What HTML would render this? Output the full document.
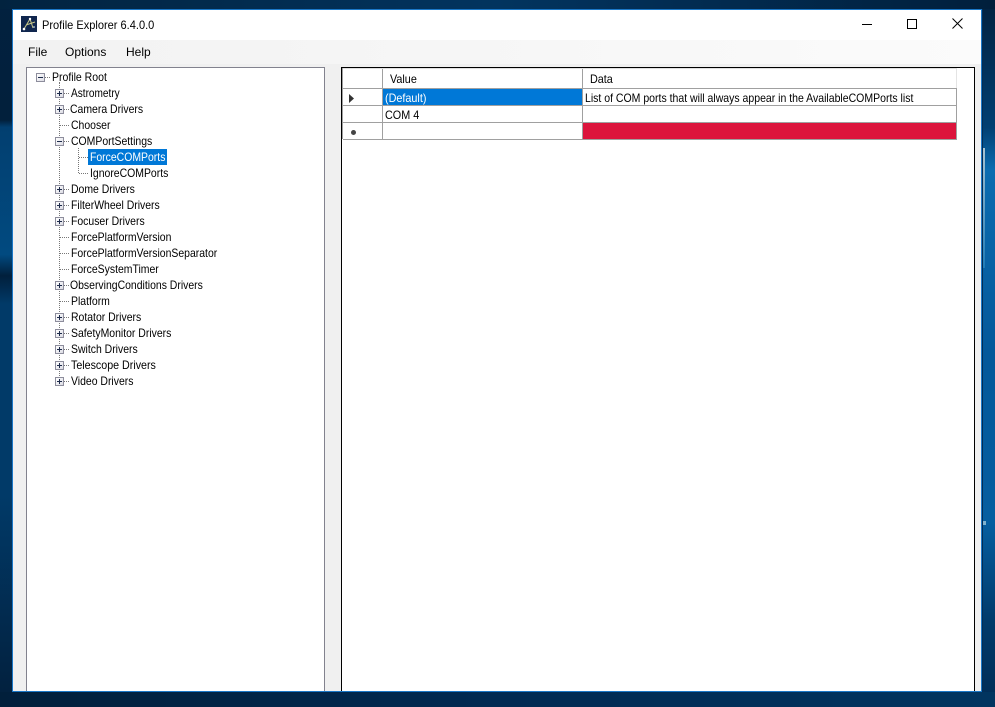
<!DOCTYPE html>
<html><head><meta charset="utf-8"><style>
html,body{margin:0;padding:0;width:995px;height:707px;overflow:hidden}
body{position:relative;font-family:"Liberation Sans",sans-serif;font-size:12px;color:#000;
background:linear-gradient(90deg,#02274a 0,#012c55 100%)}
.a{position:absolute}
.t{position:absolute;white-space:nowrap;line-height:16px;height:16px;transform:scaleX(.87);transform-origin:0 50%}
.m{transform:none}
.b{position:absolute;width:7px;height:7px;border:1px solid #8d8d9c;background:linear-gradient(135deg,#fff,#dcdce4)}
.b:before{content:"";position:absolute;left:1px;top:3px;width:5px;height:1px;background:#1c2a4a}
.p:after{content:"";position:absolute;left:3px;top:1px;width:1px;height:5px;background:#1c2a4a}
.h{position:absolute;height:0;border-top:1px dotted #777}
.v{position:absolute;width:0;border-left:1px dotted #777}
.g{position:absolute;background:#a0a0a0}
</style></head><body>
<div class="a" style="left:0;top:0;width:12px;height:707px;background:linear-gradient(180deg,#02213f 0,#02203c 17%,#023f70 18%,#014a80 36%,#011f3c 39%,#013a68 43%,#013a68 70%,#021f3c 100%)"></div>
<div class="a" style="left:983px;top:0;width:12px;height:707px;background:linear-gradient(180deg,#02213f 0,#013f72 18%,#0b6cb0 24%,#04589a 50%,#055ea0 74%,#013a6a 88%,#012c55 100%)"></div>
<div class="a" style="left:983px;top:148px;width:2px;height:120px;background:linear-gradient(180deg,#a9c4d2,#1f7cb8)"></div>
<div class="a" style="left:983px;top:521px;width:3px;height:4px;background:#7fb2cf"></div>
<div class="a" style="left:0;top:0;width:995px;height:9px;background:linear-gradient(90deg,#02233f,#02345f 50%,#011f3c)"></div>
<div class="a" style="left:0;top:692px;width:995px;height:15px;background:linear-gradient(90deg,#011f3b,#012a52 50%,#013560)"></div>

<div class="a" style="left:12px;top:9px;width:968px;height:681px;border:1px solid #1b78c8;background:#f0f0f0"></div>
<div class="a" style="left:13px;top:10px;width:968px;height:30px;background:#fff"></div>
<div class="a" style="left:13px;top:40px;width:968px;height:24px;background:linear-gradient(90deg,#f2f2f2,#fbfbfb)"></div>

<svg class="a" style="left:21px;top:16px" width="16" height="16" viewBox="0 0 16 16"><rect width="16" height="16" fill="#10264e"/><path d="M3 13L9 3L12 12M5 9L14 6" stroke="#c8c88a" stroke-width="1" fill="none"/><circle cx="3" cy="13" r="1.3" fill="#fff"/><circle cx="9" cy="3" r="1.2" fill="#fff"/><circle cx="13" cy="11" r="1" fill="#9ab"/></svg>
<div class="t" style="left:42px;top:17px;transform:scaleX(.92)">Profile Explorer 6.4.0.0</div>
<div class="a" style="left:862px;top:24px;width:10px;height:1px;background:#000"></div>
<div class="a" style="left:907px;top:19px;width:8px;height:8px;border:1px solid #000"></div>
<svg class="a" style="left:952px;top:18px" width="11" height="11"><path d="M.5 .5L10.5 10.5M10.5 .5L.5 10.5" stroke="#000" stroke-width="1" fill="none"/></svg>

<div class="t m" style="left:28px;top:44px">File</div>
<div class="t m" style="left:65px;top:44px">Options</div>
<div class="t m" style="left:126px;top:44px">Help</div>

<div class="a" style="left:26px;top:67px;width:297px;height:623px;border:1px solid #82828e;border-bottom:0;background:#fff"></div>
<div class="v" style="left:59px;top:82px;height:300px"></div>
<div class="v" style="left:78px;top:148px;height:25px"></div>
<div class="b" style="left:36px;top:73px"></div><div class="h" style="left:45px;top:77px;width:5px"></div>
<div class="t" style="left:52px;top:69px;transform:scaleX(.875)">Profile Root</div>

<div class="b p" style="left:55px;top:89px"></div><div class="h" style="left:64px;top:93px;width:5px"></div><div class="t" style="left:71px;top:85px;transform:scaleX(.84)">Astrometry</div>
<div class="b p" style="left:55px;top:105px"></div><div class="h" style="left:64px;top:109px;width:5px"></div><div class="t" style="left:70px;top:101px">Camera Drivers</div>
<div class="h" style="left:60px;top:125px;width:9px"></div><div class="t" style="left:71px;top:117px">Chooser</div>
<div class="b" style="left:55px;top:137px"></div><div class="h" style="left:64px;top:141px;width:5px"></div><div class="t" style="left:71px;top:133px">COMPortSettings</div>
<div class="h" style="left:79px;top:157px;width:9px"></div><div class="a" style="left:88px;top:149px;width:79px;height:16px;background:#0078d7"></div><div class="t" style="left:90px;top:149px;color:#fff">ForceCOMPorts</div>
<div class="h" style="left:79px;top:173px;width:9px"></div><div class="t" style="left:90px;top:165px">IgnoreCOMPorts</div>
<div class="b p" style="left:55px;top:185px"></div><div class="h" style="left:64px;top:189px;width:5px"></div><div class="t" style="left:71px;top:181px">Dome Drivers</div>
<div class="b p" style="left:55px;top:201px"></div><div class="h" style="left:64px;top:205px;width:5px"></div><div class="t" style="left:71px;top:197px">FilterWheel Drivers</div>
<div class="b p" style="left:55px;top:217px"></div><div class="h" style="left:64px;top:221px;width:5px"></div><div class="t" style="left:71px;top:213px">Focuser Drivers</div>
<div class="h" style="left:60px;top:237px;width:9px"></div><div class="t" style="left:71px;top:229px">ForcePlatformVersion</div>
<div class="h" style="left:60px;top:253px;width:9px"></div><div class="t" style="left:71px;top:245px">ForcePlatformVersionSeparator</div>
<div class="h" style="left:60px;top:269px;width:9px"></div><div class="t" style="left:71px;top:261px">ForceSystemTimer</div>
<div class="b p" style="left:55px;top:281px"></div><div class="h" style="left:64px;top:285px;width:5px"></div><div class="t" style="left:70px;top:277px">ObservingConditions Drivers</div>
<div class="h" style="left:60px;top:301px;width:9px"></div><div class="t" style="left:71px;top:293px">Platform</div>
<div class="b p" style="left:55px;top:313px"></div><div class="h" style="left:64px;top:317px;width:5px"></div><div class="t" style="left:71px;top:309px">Rotator Drivers</div>
<div class="b p" style="left:55px;top:329px"></div><div class="h" style="left:64px;top:333px;width:5px"></div><div class="t" style="left:71px;top:325px">SafetyMonitor Drivers</div>
<div class="b p" style="left:55px;top:345px"></div><div class="h" style="left:64px;top:349px;width:5px"></div><div class="t" style="left:71px;top:341px">Switch Drivers</div>
<div class="b p" style="left:55px;top:361px"></div><div class="h" style="left:64px;top:365px;width:5px"></div><div class="t" style="left:71px;top:357px;transform:scaleX(.89)">Telescope Drivers</div>
<div class="b p" style="left:55px;top:377px"></div><div class="h" style="left:64px;top:381px;width:5px"></div><div class="t" style="left:71px;top:373px">Video Drivers</div>

<div class="a" style="left:341px;top:67px;width:632px;height:623px;border:1px solid #000;border-bottom:0;background:#fff"></div>
<div class="g" style="left:342px;top:68px;width:1px;height:71px"></div>
<div class="a" style="left:343px;top:68px;width:614px;height:1px;background:#e0e0e0"></div>
<div class="g" style="left:382px;top:69px;width:1px;height:71px"></div>
<div class="g" style="left:582px;top:69px;width:1px;height:71px"></div>
<div class="a" style="left:956px;top:69px;width:1px;height:19px;background:#e4e4e4"></div>
<div class="g" style="left:956px;top:88px;width:1px;height:52px"></div>
<div class="g" style="left:343px;top:88px;width:614px;height:1px"></div>
<div class="g" style="left:343px;top:105px;width:614px;height:1px"></div>
<div class="g" style="left:343px;top:122px;width:614px;height:1px"></div>
<div class="g" style="left:343px;top:139px;width:614px;height:1px"></div>
<div class="a" style="left:383px;top:89px;width:199px;height:16px;background:#0078d7"></div>
<div class="a" style="left:583px;top:123px;width:373px;height:16px;background:#dc143c"></div>
<svg class="a" style="left:349px;top:94px" width="6" height="10"><path d="M0 0L5 4.5L0 9Z" fill="#333"/></svg>
<div class="a" style="left:351px;top:130px;width:5px;height:5px;border-radius:3px;background:#444"></div>
<div class="t" style="left:390px;top:71px;transform:scaleX(.9)">Value</div>
<div class="t" style="left:590px;top:71px;transform:scaleX(.9)">Data</div>
<div class="t" style="left:385px;top:90px;color:#fff;transform:scaleX(.9)">(Default)</div>
<div class="t" style="left:585px;top:90px;transform:scaleX(.875)">List of COM ports that will always appear in the AvailableCOMPorts list</div>
<div class="t" style="left:385px;top:107px;transform:scaleX(.9)">COM 4</div>
</body></html>
